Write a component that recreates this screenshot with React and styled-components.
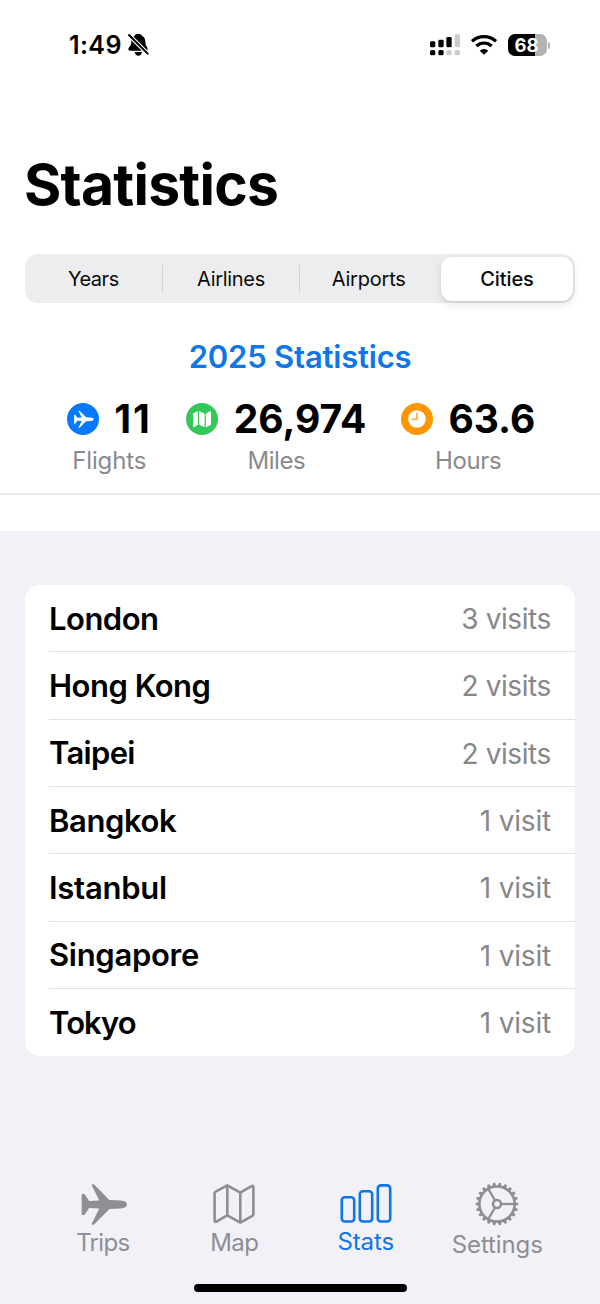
import React, {useState} from "react";
import styled, {createGlobalStyle} from 'styled-components';

const GlobalStyle = createGlobalStyle`
  * {
    box-sizing: border-box;
  }

  body {
    margin: 0;
    background: #f2f1f8;
    font-family: Inter, "Liberation Sans", sans-serif;
    color: #000;
  }
`;

let Screen = styled.div`
  width: 600px;
  height: 1304px;
  display: flex;
  flex-direction: column;
  overflow: hidden;
`;

let Header = styled.header`
  height: 495px;
  background: #fff;
  border-bottom: 2px solid #e9e9eb;
`;

let StatusBar = styled.div`
  display: flex;
  justify-content: space-between;
  height: 90px;
  padding: 0 50px 0 69px;
`;

let StatusGroup = styled.div`
  display: flex;
  align-items: center;
  gap: ${props => props.gap}px;
`;

let Time = styled.span`
  font-size: 25px;
  font-weight: 600;
  letter-spacing: 0.4px;
`;

let Battery = styled.div`
  display: flex;
  align-items: center;
  gap: 1px;
`;

let BatteryLevel = styled.div`
  width: 39px;
  height: 22px;
  padding-right: 2px;
  border-radius: 7px;
  background: linear-gradient(to right, #000 ${props => props.level}%, #b3b3b3 ${props => props.level}%);
  color: #fff;
  font-size: 18.5px;
  font-weight: 700;
  line-height: 22px;
  text-align: center;
`;

let BatteryTip = styled.div`
  width: 2px;
  height: 7px;
  border-radius: 0 2px 2px 0;
  background: #b3b3b3;
`;

let Title = styled.h1`
  margin: 59px 0 0 24px;
  font-size: 57px;
  font-weight: 700;
  line-height: 72px;
  letter-spacing: -0.75px;
`;

let Segments = styled.div`
  display: flex;
  align-items: center;
  height: 49px;
  margin: 33px 25px 0;
  padding: 0 2px 0 0;
  border-radius: 13px;
  background: #ededf0;
`;

let Segment = styled.button`
  flex: ${props => props.active ? '0 0 132px' : '1 1 0'};
  height: 44px;
  margin-left: ${props => props.active ? 3 : 0}px;
  padding: 0;
  border: 0;
  border-radius: 11px;
  background: ${props => props.active ? '#fff' : 'transparent'};
  box-shadow: ${props => props.active ? '0 3px 8px rgba(0, 0, 0, 0.12), 0 1px 2px rgba(0, 0, 0, 0.06)' : 'none'};
  color: #0a0a0a;
  font-family: inherit;
  font-size: 20px;
  font-weight: ${props => props.active ? 500 : 400};
  letter-spacing: ${props => props.spacing}px;
`;

let Divider = styled.div`
  width: 1px;
  height: 28px;
  background: ${props => props.hide ? 'transparent' : '#d3d3d6'};
`;

let Subtitle = styled.h2`
  margin: 35px 0 0;
  color: #0f76e8;
  font-size: 31px;
  font-weight: 560;
  line-height: 38px;
  letter-spacing: -0.2px;
  text-align: center;
`;

let Totals = styled.div`
  display: flex;
  justify-content: center;
  gap: 34.5px;
  margin-top: 21px;
  padding-left: 2px;
`;

let Total = styled.div`
  display: flex;
  flex-direction: column;
  align-items: center;
`;

let TotalValue = styled.div`
  display: flex;
  align-items: center;
  gap: 15.5px;
  height: 44px;
  font-size: 39px;
  font-weight: 700;
  letter-spacing: ${props => props.spacing}px;

  span {
    padding-bottom: 2px;
  }
`;

let TotalLabel = styled.div`
  margin-top: 4px;
  color: #8a8a8e;
  font-size: 24px;
  line-height: 32px;
  letter-spacing: ${props => props.spacing}px;
`;

let Content = styled.main`
  flex: 1;
  border-top: 36px solid #fff;
  padding: 54px 25px 0;
`;

let List = styled.ul`
  margin: 0;
  padding: 0 0 0 24px;
  border-radius: 15px;
  background: #fff;
  list-style: none;
`;

let Row = styled.li`
  display: flex;
  align-items: center;
  justify-content: space-between;
  height: 67.33px;
  padding-right: 24px;

  &:not(:last-child) {
    border-bottom: 1.4px solid #e2e2e4;
  }
`;

let City = styled.span`
  font-size: 31px;
  font-weight: 570;
  letter-spacing: ${props => props.spacing}px;
`;

let Visits = styled.span`
  padding-top: 1.5px;
  color: #87878a;
  font-size: 28px;
  letter-spacing: ${props => props.spacing}px;
`;

let TabBar = styled.nav`
  display: flex;
  height: 98px;
  padding: 0 37px;
`;

let Tab = styled.button`
  flex: 1;
  display: flex;
  flex-direction: column;
  align-items: center;
  padding: 0;
  border: 0;
  background: none;
  color: ${props => props.active ? '#0f76e8' : '#8e8e93'};
  font-family: inherit;
`;

let TabIcon = styled.div`
  display: flex;
  align-items: center;
  height: 44px;
  padding-left: ${props => props.shift || 0}px;
`;

let TabLabel = styled.span`
  margin-top: ${props => props.top}px;
  font-size: 24px;
  line-height: 32px;
  letter-spacing: ${props => props.spacing}px;
`;

let HomeIndicator = styled.div`
  width: 213px;
  height: 8px;
  margin: 4px auto 12px;
  border-radius: 4px;
  background: #000;
`;

const planePath = "M68 73Q68 70 71 70H76L90 91L120 89L98 45Q96 41 100 41Q104 41 107 44L150 88L184 89Q202 91 202 101Q202 111 184 113L150 114L107 158Q104 161 100 161Q96 161 98 157L120 113L90 111L76 132H71Q68 132 68 129Z";

function BellIcon() {
    return (
        <svg width="22" height="24" viewBox="234 41 66 72">
            <path d="M265 43C258 43 255 46 254 49C246 53 244 61 244 68C244 80 235 83 235 90Q235 94 240 94H289Q293 94 293 90C293 84 286 79 286 68C286 61 284 53 276 49C275 46 272 43 265 43Z"/>
            <path d="M254 98H276Q274 109 265 109T254 98Z"/>
            <path d="M236 46L294 104" stroke="#fff" strokeWidth="12.5"/>
            <path d="M237 47L293 103" stroke="#000" strokeWidth="6" strokeLinecap="round"/>
        </svg>
    )
}

function SignalIcon() {
    let bars = [[31, 63], [56, 58], [80, 50], [105, 42]];
    return (
        <svg width="30" height="22" viewBox="31 41 90 66">
            {
                bars.map(([x, y], i) => (
                    <g key={x}>
                        <rect x={x} y={y} width="16" height={81 - y} rx="4" fill={i < 3 ? '#000' : '#ccc'}/>
                        <rect x={x} y="89" width="16" height="16" rx="5" fill={i < 2 ? '#000' : '#ccc'}/>
                    </g>
                ))
            }
        </svg>
    )
}

function WifiIcon() {
    return (
        <svg width="26" height="20" viewBox="154 44 78 60" fill="none" stroke="#000" strokeWidth="9.5">
            <path d="M157 63Q172 49 193 49T229 63"/>
            <path d="M170 77Q180 68 193 68T216 77"/>
            <path d="M180 91Q186 86 193 86T206 91L193 103Z" fill="#000" stroke="none"/>
        </svg>
    )
}

function PlaneBadge() {
    return (
        <svg width="32" height="32" viewBox="0 0 32 32">
            <circle cx="16" cy="16" r="16" fill="#067aff"/>
            <svg x="6.5" y="7.5" width="20.5" height="17.5" viewBox="66 41 136 120" fill="#fff">
                <path d={planePath}/>
            </svg>
        </svg>
    )
}

function MapBadge() {
    return (
        <svg width="32" height="32" viewBox="0 0 32 32">
            <circle cx="16" cy="16" r="16" fill="#34c759"/>
            <path d="M7 10.5L12 8V22L8 24.2Q7 24.6 7 23.5Z M13.2 8L18.6 10.7V24.2L13.2 21.7Z M19.8 10.7L24 8.3Q25 7.8 25 9V21.7L19.8 24.4Z" fill="#fff"/>
        </svg>
    )
}

function ClockBadge() {
    return (
        <svg width="32" height="32" viewBox="0 0 32 32">
            <circle cx="16" cy="16" r="16" fill="#ff9500"/>
            <circle cx="16" cy="16" r="8.8" fill="#fff"/>
            <path d="M16 10.5V16.2H11.2" fill="none" stroke="#ff9500" strokeWidth="1.3" strokeLinecap="round"/>
        </svg>
    )
}

function TripsIcon() {
    return (
        <svg width="46" height="41" viewBox="66 41 136 120" fill="currentColor">
            <path d={planePath}/>
        </svg>
    )
}

function MapIcon() {
    return (
        <svg width="42" height="40" viewBox="0 0 42 40" fill="none" stroke="currentColor" strokeWidth="2.6" strokeLinejoin="round">
            <path d="M1.6 9.4Q1.6 8.2 2.6 7.6L14.3 1.4L27.3 8.7L38.5 2.1Q40.4 1.2 40.4 3.2V30Q40.4 31.2 39.4 31.8L27.3 38.6L14.3 31.4L3.4 37.6Q1.6 38.4 1.6 36.5Z"/>
            <path d="M14.3 1.4V31.4M27.3 8.7V38.6"/>
        </svg>
    )
}

function StatsIcon() {
    return (
        <svg width="52" height="40" viewBox="0 0 52 40" fill="none" stroke="currentColor" strokeWidth="2.6">
            <rect x="1.8" y="13.3" width="12.4" height="24.2" rx="3"/>
            <rect x="19.8" y="7.3" width="12.4" height="30.2" rx="3"/>
            <rect x="37.8" y="1.4" width="12.4" height="36.1" rx="3"/>
        </svg>
    )
}

function GearIcon() {
    // 22 teeth, first one points right
    let teeth = Array.from({length: 22}, (_, i) => i * 360 / 22);
    return (
        <svg width="44" height="44" viewBox="-22 -22 44 44" fill="none" stroke="currentColor" strokeWidth="2.5">
            <circle r="17.6"/>
            <circle r="4"/>
            {
                teeth.map((a) => (
                    <path key={a} d="M18 -2.1L21.2 -1.1Q21.8 0 21.2 1.1L18 2.1Z" fill="currentColor" stroke="none" transform={`rotate(${a})`}/>
                ))
            }
            {
                [0, 120, 240].map((a) => (
                    <path key={a} d="M4 0H17.6" strokeWidth="2.3" transform={`rotate(${a})`}/>
                ))
            }
        </svg>
    )
}

const segments = [
    {name: 'Years', spacing: -0.5},
    {name: 'Airlines', spacing: -0.3},
    {name: 'Airports', spacing: -0.2},
    {name: 'Cities', spacing: -0.1},
];

const totals = [
    {label: 'Flights', value: '11', icon: <PlaneBadge/>, spacing: 2, labelSpacing: -0.15},
    {label: 'Miles', value: '26,974', icon: <MapBadge/>, spacing: 0, labelSpacing: -0.4},
    {label: 'Hours', value: '63.6', icon: <ClockBadge/>, spacing: 0, labelSpacing: -0.4},
];

const cities = [
    {name: 'London', visits: 3, spacing: -0.5},
    {name: 'Hong Kong', visits: 2, spacing: -0.5},
    {name: 'Taipei', visits: 2, spacing: -0.7},
    {name: 'Bangkok', visits: 1, spacing: -0.4},
    {name: 'Istanbul', visits: 1, spacing: -0.25},
    {name: 'Singapore', visits: 1, spacing: -0.3},
    {name: 'Tokyo', visits: 1, spacing: -0.9},
];

const tabs = [
    {name: 'Trips', icon: <TripsIcon/>, top: 1, spacing: -0.7, shift: 2},
    {name: 'Map', icon: <MapIcon/>, top: 1, spacing: -0.6},
    {name: 'Stats', icon: <StatsIcon/>, top: 0, spacing: -0.1},
    {name: 'Settings', icon: <GearIcon/>, top: 2.5, spacing: -0.1},
];

function App() {

    let [segment, segmentEdit] = useState(3);
    let [tab, tabEdit] = useState(2);

    return (
        <Screen>
            <GlobalStyle/>
            <Header>
                <StatusBar>
                    <StatusGroup gap={6}>
                        <Time>1:49</Time>
                        <BellIcon/>
                    </StatusGroup>
                    <StatusGroup gap={11}>
                        <SignalIcon/>
                        <WifiIcon/>
                        <Battery>
                            <BatteryLevel level={68}>68</BatteryLevel>
                            <BatteryTip/>
                        </Battery>
                    </StatusGroup>
                </StatusBar>

                <Title>Statistics</Title>

                <Segments>
                    {
                        segments.map((s, i) => (
                            <React.Fragment key={s.name}>
                                {i > 0 && <Divider hide={i === segment || i - 1 === segment}/>}
                                <Segment active={i === segment} spacing={s.spacing} onClick={() => {
                                    segmentEdit(i);
                                }}>{s.name}</Segment>
                            </React.Fragment>
                        ))
                    }
                </Segments>

                <Subtitle>2025 Statistics</Subtitle>
                <Totals>
                    {
                        totals.map((t) => (
                            <Total key={t.label}>
                                <TotalValue spacing={t.spacing}>{t.icon}<span>{t.value}</span></TotalValue>
                                <TotalLabel spacing={t.labelSpacing}>{t.label}</TotalLabel>
                            </Total>
                        ))
                    }
                </Totals>
            </Header>

            <Content>
                <List>
                    {
                        cities.map((c) => (
                            <Row key={c.name}>
                                <City spacing={c.spacing}>{c.name}</City>
                                <Visits spacing={c.visits === 1 ? -0.2 : -0.4}>{c.visits} {c.visits === 1 ? 'visit' : 'visits'}</Visits>
                            </Row>
                        ))
                    }
                </List>
            </Content>

            <TabBar>
                {
                    tabs.map((t, i) => (
                        <Tab key={t.name} active={i === tab} onClick={() => {
                            tabEdit(i);
                        }}>
                            <TabIcon shift={t.shift}>{t.icon}</TabIcon>
                            <TabLabel top={t.top} spacing={t.spacing}>{t.name}</TabLabel>
                        </Tab>
                    ))
                }
            </TabBar>
            <HomeIndicator/>
        </Screen>
    )
}

export default App;
